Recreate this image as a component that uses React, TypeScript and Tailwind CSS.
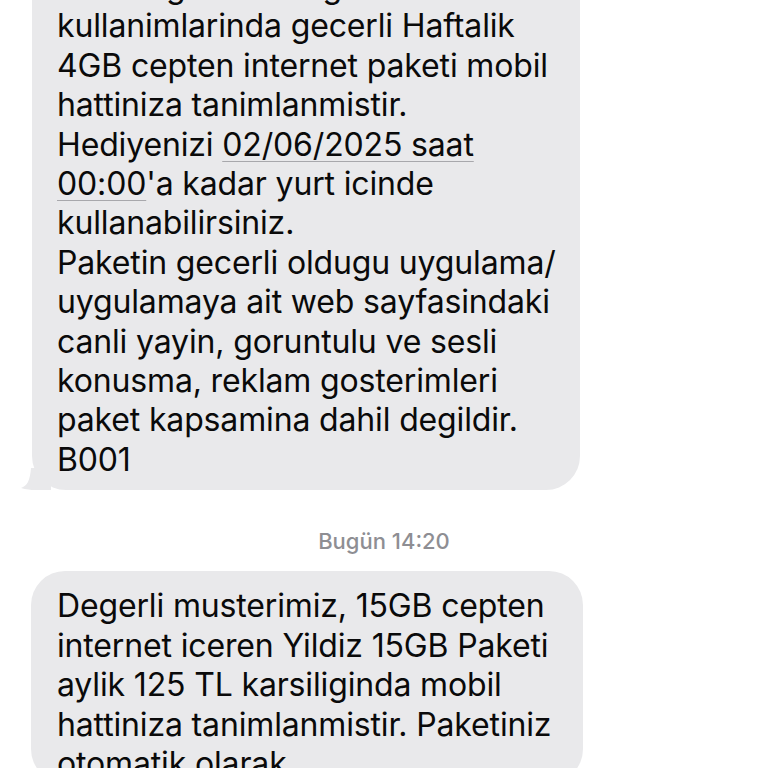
const firstMessage: { text: string; link?: [string, string, string] }[] = [
  { text: "Ortak ag ve tum ag" },
  { text: "kullanimlarinda gecerli Haftalik" },
  { text: "4GB cepten internet paketi mobil" },
  { text: "hattiniza tanimlanmistir." },
  { text: "", link: ["Hediyenizi ", "02/06/2025 saat", ""] },
  { text: "", link: ["", "00:00", "'a kadar yurt icinde"] },
  { text: "kullanabilirsiniz." },
  { text: "Paketin gecerli oldugu uygulama/" },
  { text: "uygulamaya ait web sayfasindaki" },
  { text: "canli yayin, goruntulu ve sesli" },
  { text: "konusma, reklam gosterimleri" },
  { text: "paket kapsamina dahil degildir." },
  { text: "B001" },
];

const secondMessage = [
  "Degerli musterimiz, 15GB cepten",
  "internet iceren Yildiz 15GB Paketi",
  "aylik 125 TL karsiliginda mobil",
  "hattiniza tanimlanmistir. Paketiniz",
  "otomatik olarak",
];

const Tail = () => (
  <svg
    className="absolute -left-[11px] bottom-0"
    width="30"
    height="22"
    viewBox="0 0 30 22"
  >
    <path d="M30 0 L30 22 L14 22 C10 22 5 21.5 0 20 C6 18 9 13 10 0 Z" fill="#e9e9eb" />
  </svg>
);

export default function App() {
  return (
    <div
      className="h-[768px] w-[768px] overflow-hidden bg-white text-[#0a0a0a]"
      style={{ fontFamily: "Inter, 'Liberation Sans', sans-serif" }}
    >
      <div className="relative ml-[32px] -mt-[45px] w-[548px]">
        <div className="rounded-[34px] bg-[#e9e9eb] pl-[25px] pr-4 pt-3 pb-[11px] text-[32px] leading-[39.4px] tracking-[-0.15px]">
          {firstMessage.map((line, i) => (
            <div key={i} className="whitespace-nowrap">
              {line.link ? (
                <>
                  {line.link[0]}
                  <span className="underline decoration-[#a8a8ac] decoration-1 underline-offset-[5px]">
                    {line.link[1]}
                  </span>
                  {line.link[2]}
                </>
              ) : (
                line.text
              )}
            </div>
          ))}
        </div>
        <Tail />
      </div>

      <div className="mt-[35px] mb-[13px] text-center text-[22px] font-medium text-[#8e8e93]">
        Bugün 14:20
      </div>

      <div className="ml-[31px] w-[552px] rounded-[34px] bg-[#e9e9eb] pl-[26px] pr-4 pt-[15px] text-[32px] leading-[39.4px] tracking-[-0.15px]">
        {secondMessage.map((line, i) => (
          <div key={i} className="whitespace-nowrap">
            {line}
          </div>
        ))}
      </div>
    </div>
  );
}
